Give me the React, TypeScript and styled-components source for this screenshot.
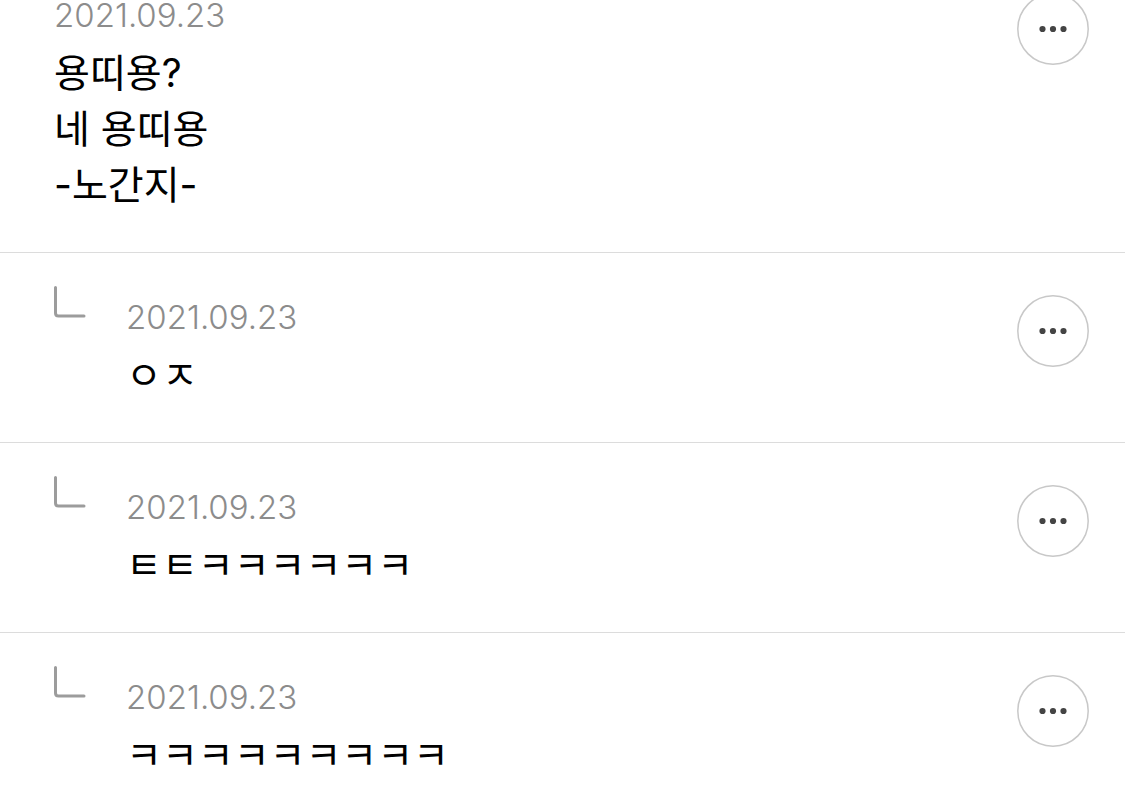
import React from "react";
import styled, { createGlobalStyle } from "styled-components";

const GlobalStyle = createGlobalStyle`
  *, *::before, *::after { box-sizing: border-box; }
  body {
    margin: 0;
    background: #fff;
    color: #000;
    font-family: Inter, "Noto Sans CJK KR", sans-serif;
  }
`;

const Viewport = styled.main`
  height: 100vh;
  overflow: hidden;
`;

/* The thread is scrolled a little way past the top of its first comment. */
const Thread = styled.ul`
  list-style: none;
  margin: -50px 0 0;
  padding: 0;
`;

const Item = styled.li`
  display: flex;
  align-items: flex-start;
  padding: 0 36px 0 54px;
  border-top: 1px solid #dcdcdc;
`;

const ReplyMark = styled.svg`
  flex: none;
  width: 32px;
  height: 32px;
  margin: 33px 40px 0 0;
`;

const Body = styled.article`
  flex: 1;
  min-width: 0;
  padding: 44px 0 39px;
`;

const PostedAt = styled.time`
  display: block;
  margin-bottom: 10px;
  color: #8c8c8c;
  font-size: 33px;
  font-weight: 300;
  line-height: 40px;
`;

const Message = styled.p`
  margin: 0;
  font-size: 39px;
  line-height: 56px;
  white-space: pre-line;
`;

const MoreButton = styled.button`
  display: flex;
  flex: none;
  align-items: center;
  justify-content: center;
  width: 72px;
  height: 72px;
  margin-top: 42px;
  padding: 0;
  border: 0;
  border-radius: 50%;
  background: none;
  cursor: pointer;
`;

interface Comment {
  id: number;
  text: string;
  reply: boolean;
}

const comments: Comment[] = [
  { id: 1, text: "용띠용?\n네 용띠용\n-노간지-", reply: false },
  { id: 2, text: "ㅇㅈ", reply: true },
  { id: 3, text: "ㅌㅌㅋㅋㅋㅋㅋㅋ", reply: true },
  { id: 4, text: "ㅋㅋㅋㅋㅋㅋㅋㅋㅋ", reply: true },
];

function CommentItem({ text, reply }: Comment) {
  return (
    <Item>
      {reply && (
        <ReplyMark viewBox="0 0 32 32" fill="none" aria-hidden="true">
          <path
            d="M1.5 1.5V27Q1.5 30 4.5 30H30"
            stroke="#9c9c9c"
            strokeWidth="3"
            strokeLinecap="round"
          />
        </ReplyMark>
      )}
      <Body>
        <PostedAt dateTime="2021-09-23">2021.09.23</PostedAt>
        <Message lang="ko">{text}</Message>
      </Body>
      <MoreButton type="button" aria-label="더보기">
        <svg width="72" height="72" viewBox="0 0 72 72" aria-hidden="true">
          <circle cx="36" cy="36" r="35.2" fill="none" stroke="#c8c8c8" strokeWidth="1.5" />
          <g fill="#444">
            <circle cx="25.5" cy="36" r="3.1" />
            <circle cx="36" cy="36" r="3.1" />
            <circle cx="46.5" cy="36" r="3.1" />
          </g>
        </svg>
      </MoreButton>
    </Item>
  );
}

export default function App() {
  return (
    <>
      <GlobalStyle />
      <Viewport>
        <Thread>
          {comments.map((comment) => (
            <CommentItem key={comment.id} {...comment} />
          ))}
        </Thread>
      </Viewport>
    </>
  );
}
